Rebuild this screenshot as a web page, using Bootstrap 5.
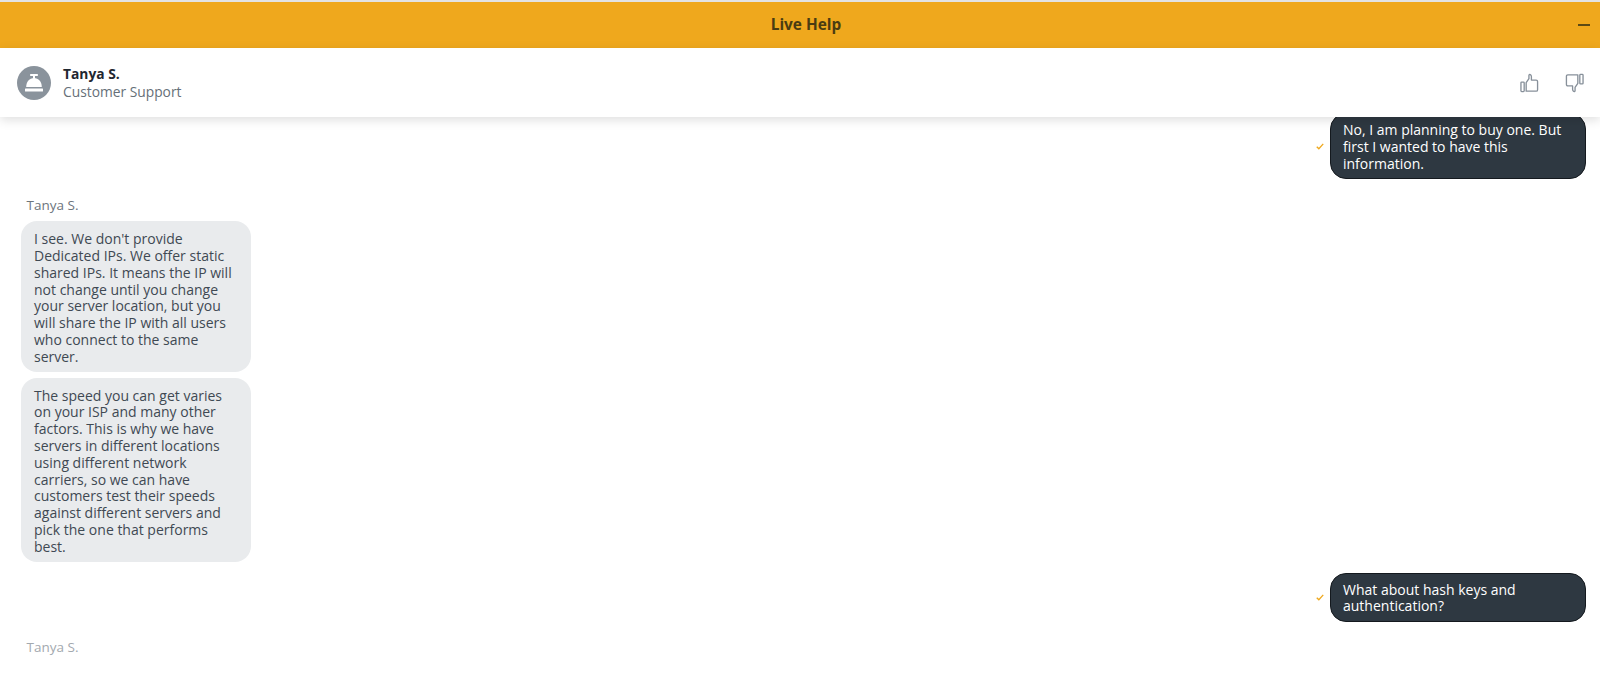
<!DOCTYPE html>
<html lang="en">
<head>
<meta charset="utf-8">
<title>Live Help</title>
<link href="https://cdn.jsdelivr.net/npm/bootstrap@5.3.0/dist/css/bootstrap.min.css" rel="stylesheet">
<style>
html,body{height:680px;overflow:hidden;background:#fff;}
body{font-family:"Open Sans","Noto Sans",sans-serif;font-size:14px;line-height:16.8px;color:#3f4953;border-top:2px solid #e3e3e3;}
.help-bar{height:46px;background:#efa81d;color:#4a3c12;font-weight:700;font-size:15.4px;padding-left:12px;}
.help-min{right:10px;top:22px;width:12px;height:2px;background:#5c4a14;}
.agent-bar{height:69px;padding:0 16px 0 17px;box-shadow:0 3px 10px rgba(0,0,0,.13);z-index:2;}
.agent-pic{width:34px;height:34px;background:#8a939c;}
.agent-name{font-weight:700;font-size:13.8px;color:#1f2730;line-height:19px;}
.agent-role{font-size:13.8px;color:#666f78;line-height:18px;}
.rate-row{gap:26px;}
.chat-pane{height:563px;overflow:hidden;padding:0 14px 0 21px;}
.bub{width:230px;padding:10px 13px 6px;border-radius:16px;background:#e9ebed;}
.bub-me{width:256px;background:#2e3841;color:#fff;border:1px solid #14191e;padding:8px 12px 6px;}
.first-me{margin-top:-4px;}
.sender{color:#6d757d;padding-left:5.5px;font-size:13.5px;margin-top:18px;margin-bottom:7px;}
.sender-fade{color:#a3a9af;margin-top:17px;}
.bub-gap{margin-bottom:6px;}
.me-row{margin-top:11px;}
.tick{margin-right:6px;}
</style>
</head>
<body>
<div class="help-bar d-flex align-items-center justify-content-center position-relative">Live Help<span class="help-min position-absolute"></span></div>
<div class="agent-bar d-flex align-items-center justify-content-between position-relative bg-white">
  <div class="d-flex align-items-center gap-2">
    <div class="agent-pic rounded-circle d-flex align-items-center justify-content-center me-1">
      <svg width="18" height="18" viewBox="0 0 18 18" fill="#fff"><rect x="5" y="0" width="8" height="2" rx=".8"/><rect x="8" y="1.5" width="2" height="3"/><path d="M1.2 13C1.2 7.5 4.5 4 9 4s7.8 3.5 7.8 9z"/><rect x="0" y="14.5" width="18" height="3" rx=".5"/></svg>
    </div>
    <div>
      <div class="agent-name">Tanya S.</div>
      <div class="agent-role">Customer Support</div>
    </div>
  </div>
  <div class="d-flex rate-row">
    <svg width="19" height="20" viewBox="0 0 20 20" fill="none" stroke="#87909a" stroke-width="1.4" stroke-linejoin="round"><rect x="1" y="9" width="3.4" height="10" rx=".8"/><path d="M6.5 18.6V9.6L9.4 5.4V2.2c0-1 .7-1.4 1.4-1.1.9.4 1.2 1.2 1.2 2.2v3.6h5c1 0 1.5.6 1.5 1.5v8.6c0 1-.5 1.6-1.5 1.6z"/></svg>
    <svg width="19" height="20" viewBox="0 0 20 20" fill="none" stroke="#87909a" stroke-width="1.4" stroke-linejoin="round"><rect x="15.6" y="1" width="3.4" height="10" rx=".8"/><path d="M13.5 1.4v9l-2.9 4.2v3.2c0 1-.7 1.4-1.4 1.1-.9-.4-1.2-1.2-1.2-2.2v-3.6h-5c-1 0-1.5-.6-1.5-1.5V3c0-1 .5-1.6 1.5-1.6z"/></svg>
  </div>
</div>
<div class="chat-pane">
  <div class="d-flex justify-content-end align-items-center first-me">
    <svg class="tick" width="8" height="7" viewBox="0 0 9 8" fill="none" stroke="#efa81d" stroke-width="1.5"><path d="M.8 4.2l2.4 2.4L8.2 1"/></svg>
    <div class="bub bub-me">No, I am planning to buy one. But first I wanted to have this information.</div>
  </div>
  <div class="sender">Tanya S.</div>
  <div class="bub bub-gap">I see. We don't provide Dedicated IPs. We offer static shared IPs. It means the IP will not change until you change your server location, but you will share the IP with all users who connect to the same server.</div>
  <div class="bub">The speed you can get varies on your ISP and many other factors. This is why we have servers in different locations using different network carriers, so we can have customers test their speeds against different servers and pick the one that performs best.</div>
  <div class="d-flex justify-content-end align-items-center me-row">
    <svg class="tick" width="8" height="7" viewBox="0 0 9 8" fill="none" stroke="#efa81d" stroke-width="1.5"><path d="M.8 4.2l2.4 2.4L8.2 1"/></svg>
    <div class="bub bub-me">What about hash keys and authentication?</div>
  </div>
  <div class="sender sender-fade">Tanya S.</div>
</div>
<script src="https://cdn.jsdelivr.net/npm/bootstrap@5.3.0/dist/js/bootstrap.bundle.min.js"></script>
</body>
</html>
